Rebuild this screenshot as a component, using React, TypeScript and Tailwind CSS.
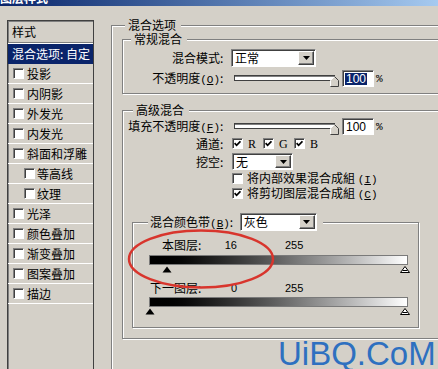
import clsx from 'clsx'
import type { ReactNode } from 'react'

const sunken =
  'bg-white border border-t-[#808080] border-l-[#808080] border-r-white border-b-white shadow-[inset_1px_1px_0_#404040]'
const etched = 'border border-[#808080] shadow-[inset_1px_1px_0_#ffffff,1px_1px_0_#ffffff]'

const Colon = () => <span className="inline-block w-[6px] text-left">:</span>

const Key = ({ k }: { k: string }) => (
  <span className="font-['Liberation_Mono',monospace] text-[11px] leading-[12px]">
    (<span className="underline underline-offset-[1px]">{k}</span>)
  </span>
)

const Label = ({ children }: { children: ReactNode }) => (
  <div className="w-[103px] shrink-0 text-right whitespace-nowrap">{children}</div>
)

const Box = ({ on }: { on?: boolean }) => (
  <span className={clsx('w-[11px] h-[11px] shrink-0 flex items-center justify-center', sunken)}>
    {on && (
      <svg width="7" height="7" viewBox="0 0 7 7">
        <path d="M0.6 3.2 2.6 5.3 6.4 1.3" stroke="#000" strokeWidth="1.7" fill="none" />
      </svg>
    )}
  </span>
)

const Select = ({ text, className }: { text: string; className: string }) => (
  <div className={clsx('flex items-stretch shrink-0', sunken, className)}>
    <span className="pl-[3px] self-center leading-[14px]">{text}</span>
    <span className="ml-auto my-px mr-px w-[16px] flex items-center justify-center bg-[#d4d0c8] border border-t-white border-l-white border-r-[#404040] border-b-[#404040] shadow-[inset_-1px_-1px_0_#808080]">
      <svg width="7" height="4" viewBox="0 0 7 4">
        <path d="M0 0h7L3.5 4z" fill="#000" />
      </svg>
    </span>
  </div>
)

const Thumb = ({ className }: { className: string }) => (
  <svg width="9" height="11" viewBox="0 0 9 11" className={className}>
    <path d="M0.5 10.5V4.5L4.5 0.5L8.5 4.5V10.5Z" fill="#d4d0c8" />
    <path d="M0.5 10V4.5L4.5 0.5" stroke="#ffffff" fill="none" />
    <path d="M4.5 0.5L8.5 4.5V10.5H0.5" stroke="#404040" fill="none" />
  </svg>
)

const Slider = () => (
  <div className="relative w-[106px] h-full ml-[8px] shrink-0">
    <div className="absolute left-0 top-[5px] w-[101px] h-[6px] bg-white border border-[#404040] shadow-[inset_0_1px_0_#808080]" />
    <Thumb className="absolute left-[96px] top-[6px]" />
  </div>
)

const Field = ({ sel }: { sel?: boolean }) => (
  <div
    className={clsx(
      "ml-[2px] w-[32px] h-[17px] flex items-center pl-[2px] shrink-0 font-['Liberation_Sans',sans-serif] text-[12px]",
      sunken,
    )}
  >
    <span className={clsx('leading-[12px] px-px', sel && 'bg-[#0a246a] text-white')}>100</span>
  </div>
)

const Pct = () => <span className="ml-[2px] font-['Liberation_Mono',monospace] text-[11px]">%</span>

const Legend = ({ children, className }: { children: ReactNode; className: string }) => (
  <span className={clsx('absolute top-[-7px] pl-[3px] pr-[5px] bg-[#d4d0c8] leading-[12px]', className)}>
    {children}
  </span>
)

const Bar = () => (
  <div className="ml-[16px] w-[259px] h-[10px] border border-[#7a7a7a] bg-linear-to-r from-black to-white" />
)

const Solid = ({ className }: { className: string }) => (
  <svg width="10" height="7" viewBox="0 0 10 7" className={className}>
    <path d="M5 0.5 9.5 6.5H0.5Z" fill="#000" />
  </svg>
)

const Hollow = ({ className }: { className: string }) => (
  <svg width="10" height="7" viewBox="0 0 10 7" className={className}>
    <path d="M5 0.5 9.5 6.5H0.5Z" fill="#fff" stroke="#000" />
    <path d="M2.5 4.5H7.5" stroke="#000" />
  </svg>
)

const styles: [string, boolean][] = [
  ['投影', false],
  ['内阴影', false],
  ['外发光', false],
  ['内发光', false],
  ['斜面和浮雕', false],
  ['等高线', true],
  ['纹理', true],
  ['光泽', false],
  ['颜色叠加', false],
  ['渐变叠加', false],
  ['图案叠加', false],
  ['描边', false],
]

const num = "font-['Liberation_Sans',sans-serif] text-[11px]"

export default function App() {
  return (
    <div className="relative w-[438px] h-[369px] overflow-hidden bg-[#d4d0c8] text-black text-[12px] leading-[14px] font-['Noto_Sans_CJK_SC',sans-serif]">
      <div className="h-[6px] overflow-hidden bg-linear-to-r from-[#0a246a] to-[#a6caf0]">
        <div className="-mt-[9px] text-white font-bold">图层样式</div>
      </div>

      <div className="flex pt-[14px]">
        {/* style list */}
        <div className="ml-[7px] w-[87px] h-[360px] shrink-0 border border-[#404040] shadow-[inset_1px_1px_0_#808080]">
          <div className="h-[22px] pl-[4px] flex items-center border-b border-[#808080]">样式</div>
          <div className="h-px bg-white" />
          <div className="h-[20px] pl-[4px] flex items-center bg-[#0a246a] text-white whitespace-nowrap">
            混合选项
            <Colon />
            自定
          </div>
          {styles.map(([name, sub]) => (
            <div
              key={name}
              className={clsx('h-[20px] border-b border-white flex items-center', sub ? 'pl-[16px]' : 'pl-[5px]')}
            >
              <Box />
              <span className={sub ? 'ml-[2px]' : 'ml-[3px]'}>{name}</span>
            </div>
          ))}
        </div>

        {/* blending options */}
        <div className={clsx('relative ml-[17px] mt-[5px] w-[340px] h-[360px] shrink-0 pl-[10px] pt-[13px]', etched)}>
          <Legend className="left-[13px]">混合选项</Legend>

          <div className={clsx('relative w-[330px] h-[55px]', etched)}>
            <Legend className="left-[8px]">常规混合</Legend>
            <div className="pt-[9px]">
              <div className="h-[18px] flex items-center">
                <Label>
                  混合模式
                  <Colon />
                </Label>
                <Select text="正常" className="ml-[5px] w-[85px] h-[18px]" />
              </div>
              <div className="mt-[3px] h-[17px] flex items-center">
                <Label>
                  不透明度
                  <Key k="O" />
                  <Colon />
                </Label>
                <Slider />
                <Field sel />
                <Pct />
              </div>
            </div>
          </div>

          <div className={clsx('relative mt-[16px] w-[330px] h-[229px]', etched)}>
            <Legend className="left-[10px]">高级混合</Legend>
            <div className="pt-[7px]">
              <div className="h-[17px] flex items-center">
                <Label>
                  填充不透明度
                  <Key k="F" />
                  <Colon />
                </Label>
                <Slider />
                <Field />
                <Pct />
              </div>
              <div className="h-[17px] flex items-center">
                <Label>
                  通道
                  <Colon />
                </Label>
                <div className="ml-[6px] flex items-center">
                  {['R', 'G', 'B'].map((c) => (
                    <div key={c} className="w-[31px] flex items-center">
                      <Box on />
                      <span className="ml-[5px] font-['Liberation_Serif',serif] text-[12px]">{c}</span>
                    </div>
                  ))}
                </div>
              </div>
              <div className="mt-px h-[17px] flex items-center">
                <Label>
                  挖空
                  <Colon />
                </Label>
                <Select text="无" className="ml-[6px] w-[61px] h-[17px]" />
              </div>
              <div className="mt-px h-[15px] flex items-center pl-[109px]">
                <Box />
                <span className="ml-[4px] whitespace-nowrap leading-[13px]">
                  将内部效果混合成組 <Key k="I" />
                </span>
              </div>
              <div className="h-[15px] flex items-center pl-[109px]">
                <Box on />
                <span className="ml-[4px] whitespace-nowrap leading-[13px]">
                  将剪切图层混合成組 <Key k="C" />
                </span>
              </div>

              {/* blend if */}
              <div className={clsx('relative mt-[21px] ml-[9px] w-[287px] h-[106px]', etched)}>
                <div className="absolute top-[-10px] left-[15px] pl-[2px] pr-[6px] h-[18px] flex items-center bg-[#d4d0c8]">
                  <span className="whitespace-nowrap">
                    混合颜色带
                    <Key k="B" />
                    <Colon />
                  </span>
                  <Select text="灰色" className="ml-[4px] w-[77px] h-[18px]" />
                </div>

                <div className="mt-[15px] h-[14px] flex items-center">
                  <span className="w-[71px] text-right whitespace-nowrap">
                    本图层
                    <Colon />
                  </span>
                  <span className={clsx('w-[33px] text-right', num)}>16</span>
                  <span className={clsx('ml-[48px]', num)}>255</span>
                </div>
                <div className="mt-[3px]">
                  <Bar />
                </div>
                <div className="relative mt-px ml-[16px] w-[259px] h-[7px]">
                  <Solid className="absolute left-[13px] top-0" />
                  <Hollow className="absolute left-[251px] top-0" />
                </div>

                <div className="mt-[8px] h-[14px] flex items-center">
                  <span className="w-[71px] text-right whitespace-nowrap">
                    下一图层
                    <Colon />
                  </span>
                  <span className={clsx('w-[33px] text-right', num)}>0</span>
                  <span className={clsx('ml-[48px]', num)}>255</span>
                </div>
                <div className="mt-[2px]">
                  <Bar />
                </div>
                <div className="relative mt-px ml-[16px] w-[259px] h-[7px]">
                  <Solid className="absolute left-[-4px] top-0" />
                  <Hollow className="absolute left-[251px] top-0" />
                </div>
              </div>
            </div>
          </div>
        </div>
      </div>

      {/* hand-drawn annotation */}
      <svg className="absolute inset-0 pointer-events-none" width="438" height="369">
        <ellipse cx="201" cy="259" rx="72" ry="28.5" fill="none" stroke="#d8352d" strokeWidth="2.5" />
      </svg>

      <div className="absolute left-[278px] top-[338px] font-['Liberation_Sans',sans-serif] text-[33px] leading-[31px] text-[#2e70c0] whitespace-nowrap">
        UiBQ.CoM
      </div>
    </div>
  )
}
